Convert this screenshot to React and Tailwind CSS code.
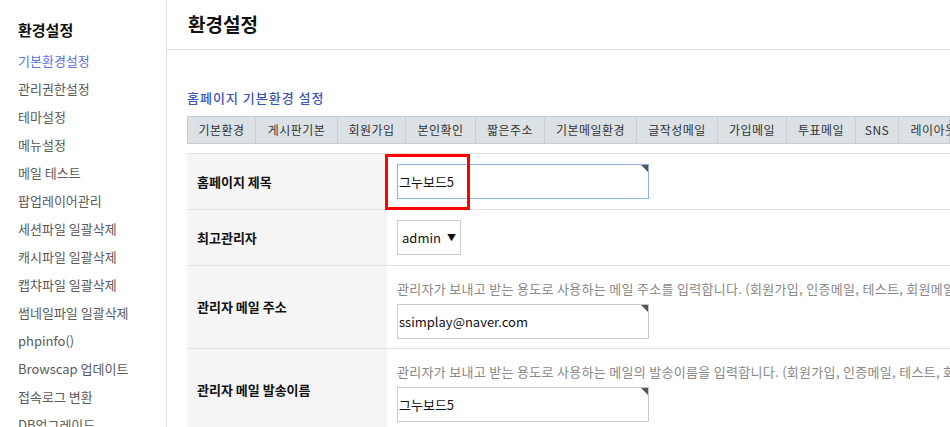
import React from 'react'

const menu = [
  '기본환경설정', '관리권한설정', '테마설정', '메뉴설정', '메일 테스트', '팝업레이어관리',
  '세션파일 일괄삭제', '캐시파일 일괄삭제', '캡챠파일 일괄삭제', '썸네일파일 일괄삭제',
  'phpinfo()', 'Browscap 업데이트', '접속로그 변환', 'DB업그레이드',
]

const tabs = [
  ['기본환경', 'w-[68px]'], ['게시판기본', 'w-[82px]'], ['회원가입', 'w-[68px]'], ['본인확인', 'w-[70px]'],
  ['짧은주소', 'w-[69px]'], ['기본메일환경', 'w-[92px]'], ['글작성메일', 'w-[81px]'], ['가입메일', 'w-[69px]'],
  ['투표메일', 'w-[69px]'], ['SNS', 'w-[43px]'], ['레이아웃', 'w-[70px]'],
]

const Corner = () => (
  <span className="absolute top-0 right-0 w-0 h-0 border-t-[7px] border-l-[7px] border-t-[#555] border-l-transparent" />
)

const Field = ({ value, focused }) => (
  <div className={`relative w-[252px] h-[35px] flex items-center px-[1px] bg-white border ${focused ? 'border-[#8ab4f0]' : 'border-[#ccc]'}`}>
    <span className="text-[13px] text-[#111]">{value}</span>
    <Corner />
  </div>
)

const Row = ({ label, h, top, children }) => (
  <div className={`flex border-b border-[#e3e3e3] ${h}`}>
    <div className="w-[200px] shrink-0 bg-[#f5f5f5] flex items-center pl-[10px] text-[13px] font-bold text-[#111]">
      {label}
    </div>
    <div className={`flex-1 pl-[10px] flex flex-col ${top ? 'justify-start pt-[14px]' : 'justify-center'}`}>{children}</div>
  </div>
)

const Help = ({ children }) => (
  <p className="text-[13px] tracking-[0.3px] text-[#888] whitespace-nowrap leading-[18px] mb-[6px]">{children}</p>
)

export default function App() {
  return (
    <div className="w-[950px] h-[427px] overflow-hidden flex bg-white" style={{ fontFamily: '"Noto Sans CJK KR", "Noto Sans", sans-serif' }}>
      <aside className="w-[167px] shrink-0 border-r border-[#ddd] pl-[18px] pt-[19px]">
        <h2 className="text-[15px] font-bold text-[#111] leading-[22px] mb-[10px]">환경설정</h2>
        <ul className="flex flex-col">
          {menu.map((m, i) => (
            <li key={m} className={`h-[28px] leading-[20px] text-[13px] ${i === 0 ? 'text-[#5b6fe6]' : 'text-[#5a5a5a]'}`}>{m}</li>
          ))}
        </ul>
      </aside>
      <main className="flex-1 min-w-0">
        <div className="h-[50px] border-b border-[#ddd] flex items-center pl-[21px]">
          <h1 className="text-[19px] font-bold text-[#111]">환경설정</h1>
        </div>
        <div className="pl-[20px] pt-[38px]">
          <h3 className="text-[13px] font-medium tracking-[1px] text-[#3a55b8] leading-[20px] mb-[8px]">홈페이지 기본환경 설정</h3>
          <div className="flex h-[28px] border border-[#c9ced2] bg-[#dce1e5] whitespace-nowrap">
            {tabs.map(([t, w]) => (
              <div key={t} className={`${w} shrink-0 border-r border-[#c9ced2] flex items-center justify-center text-[12px] tracking-[0.5px] text-[#333]`}>{t}</div>
            ))}
          </div>
          <div className="mt-[9px] border-t border-[#e3e3e3]">
            <Row label="홈페이지 제목" h="h-[56px]">
              <div className="relative">
                <Field value="그누보드5" focused />
                <div className="absolute -left-[12px] -top-[10px] w-[85px] h-[56px] border-[3px] border-[#f00] pointer-events-none" />
              </div>
            </Row>
            <Row label="최고관리자" h="h-[56px]">
              <div className="w-[64px] h-[35px] border border-[#ccc] flex items-center justify-between pl-[4px] pr-[4px]">
                <span className="text-[13px] text-[#111]">admin</span>
                <span className="text-[9px] text-[#111]">▼</span>
              </div>
            </Row>
            <Row label="관리자 메일 주소" h="h-[83px]" top>
              <Help>관리자가 보내고 받는 용도로 사용하는 메일 주소를 입력합니다. (회원가입, 인증메일, 테스트, 회원메일발송 등에서 사용)</Help>
              <Field value="ssimplay@naver.com" />
            </Row>
            <Row label="관리자 메일 발송이름" h="h-[83px]" top>
              <Help>관리자가 보내고 받는 용도로 사용하는 메일의 발송이름을 입력합니다. (회원가입, 인증메일, 테스트, 회원메일발송 등에서 사용)</Help>
              <Field value="그누보드5" />
            </Row>
          </div>
        </div>
      </main>
    </div>
  )
}
